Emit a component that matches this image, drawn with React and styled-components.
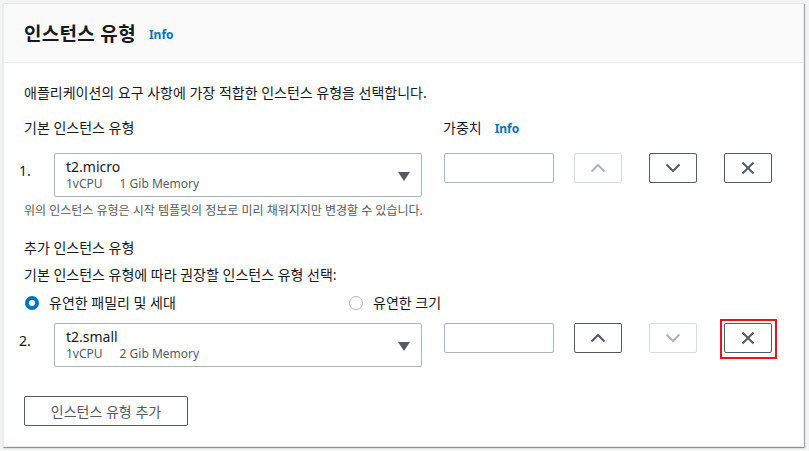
import React from 'react';
import styled, {createGlobalStyle} from 'styled-components';

const GlobalStyle = createGlobalStyle`
  html, body {
    margin: 0;
    padding: 0;
    background: #f2f3f3;
  }
  body {
    font-family: 'Noto Sans', 'Noto Sans CJK KR', sans-serif;
    color: #16191f;
    font-size: 14px;
  }
`;

const Page = styled.div`
  padding: 3px 0 0 3px;
  width: 809px;
  height: 451px;
  box-sizing: border-box;
`;

const Card = styled.section`
  width: 801px;
  background: #fff;
  border: 1px solid #eaeded;
  border-top-color: #e4e7e7;
  box-sizing: border-box;
  box-shadow: 1px 1px 1px 0 rgba(0, 28, 36, 0.3), 0 1px 1px 0 rgba(0, 28, 36, 0.2);
`;

const Header = styled.header`
  height: 58px;
  background: #fafafa;
  border-bottom: 1px solid #eaeded;
  display: flex;
  align-items: center;
  padding-left: 20px;
  gap: 13px;
`;

const Title = styled.h2`
  margin: 0;
  font-size: 19px;
  font-weight: 700;
  color: #16191f;
  letter-spacing: 0.3px;
`;

const Info = styled.span`
  font-size: 12px;
  font-weight: 700;
  color: #0073bb;
  margin-top: 2px;
`;

const Body = styled.div`
  padding: 20px 0 20px 0;
`;

const Text = styled.div`
  padding-left: 20px;
  line-height: 20px;
  font-size: 14px;
  margin-top: ${p => p.$mt || 0}px;
`;

const LabelRow = styled.div`
  display: flex;
  align-items: center;
  margin-top: 14px;
  line-height: 20px;
  padding-left: 20px;
`;

const Label = styled.span`
  width: 419px;
`;

const WeightLabel = styled.span`
  display: flex;
  align-items: center;
  gap: 13px;
`;

const Hint = styled.div`
  padding-left: 20px;
  font-size: 12px;
  line-height: 18px;
  color: #545b64;
  margin-top: 5px;
`;

const Row = styled.div`
  display: flex;
  align-items: flex-start;
  padding-left: 15px;
  margin-top: ${p => p.$mt}px;
`;

const Num = styled.span`
  width: 35px;
  padding-top: 8px;
  line-height: 20px;
`;

const Select = styled.div`
  width: 368px;
  height: 44px;
  box-sizing: border-box;
  border: 1px solid #aab7b8;
  border-radius: 2px;
  display: flex;
  align-items: center;
  padding: 0 11px;
`;

const SelectText = styled.div`
  flex: 1;
  display: flex;
  flex-direction: column;
`;

const Main = styled.span`
  line-height: 18px;
  font-size: 14px;
`;

const Sub = styled.span`
  font-size: 12px;
  line-height: 16px;
  color: #545b64;
  display: flex;
  gap: 17px;
`;

const Caret = styled.span`
  width: 0;
  height: 0;
  border-left: 6px solid transparent;
  border-right: 6px solid transparent;
  border-top: 9px solid #545b64;
  margin-top: 2px;
`;

const WeightInput = styled.div`
  width: 110px;
  height: 30px;
  box-sizing: border-box;
  border: 1px solid #aab7b8;
  border-radius: 2px;
  margin-left: 22px;
`;

const IconButton = styled.button`
  position: relative;
  width: 48px;
  height: 30px;
  box-sizing: border-box;
  border: 1px solid ${p => (p.disabled ? '#d5dbdb' : '#545b64')};
  border-radius: 2px;
  background: #fff;
  color: ${p => (p.disabled ? '#aab7b8' : '#545b64')};
  display: flex;
  align-items: center;
  justify-content: center;
  padding: 0;
  margin-left: ${p => p.$ml}px;

  &::after {
    content: '';
    display: ${p => (p.$highlight ? 'block' : 'none')};
    position: absolute;
    left: -5px;
    top: -5px;
    right: -6px;
    bottom: -7px;
    border: 2px solid #e8141e;
  }
`;

const RadioRow = styled.div`
  display: flex;
  align-items: center;
  padding-left: 21px;
  margin-top: 8px;
  line-height: 20px;
`;

const RadioItem = styled.label`
  display: flex;
  align-items: center;
  gap: 10px;
  width: ${p => p.$w}px;
`;

const Radio = styled.span`
  width: 14px;
  height: 14px;
  box-sizing: border-box;
  border-radius: 50%;
  border: ${p => (p.$checked ? '4px solid #0073bb' : '1px solid #aab7b8')};
  background: #fff;
`;

const AddButton = styled.button`
  display: block;
  margin: 29px 0 0 20px;
  width: 164px;
  height: 30px;
  box-sizing: border-box;
  border: 1px solid #545b64;
  border-radius: 2px;
  background: #fff;
  font-family: inherit;
  font-size: 14px;
  color: #545b64;
  padding: 0;
`;

const Chevron = ({up}) => (
  <svg width="16" height="10" viewBox="0 0 16 10" fill="none">
    <path
      d={up ? 'M1.5 8.5 L8 2 L14.5 8.5' : 'M1.5 1.5 L8 8 L14.5 1.5'}
      stroke="currentColor"
      strokeWidth="2"
    />
  </svg>
);

const Cross = () => (
  <svg width="14" height="14" viewBox="0 0 14 14" fill="none">
    <path d="M1.5 1.5 L12.5 12.5 M12.5 1.5 L1.5 12.5" stroke="currentColor" strokeWidth="2" />
  </svg>
);

const TypeRow = ({n, name, mem, upDisabled, downDisabled, highlight, mt}) => (
  <Row $mt={mt}>
    <Num>{n}.</Num>
    <Select>
      <SelectText>
        <Main>{name}</Main>
        <Sub>
          <span>1vCPU</span>
          <span>{mem} Gib Memory</span>
        </Sub>
      </SelectText>
      <Caret />
    </Select>
    <WeightInput />
    <IconButton $ml={20} disabled={upDisabled}>
      <Chevron up />
    </IconButton>
    <IconButton $ml={27} disabled={downDisabled}>
      <Chevron />
    </IconButton>
    <IconButton $ml={27} $highlight={highlight}>
      <Cross />
    </IconButton>
  </Row>
);

export default function App() {
  return (
    <Page>
      <GlobalStyle />
      <Card>
        <Header>
          <Title>인스턴스 유형</Title>
          <Info>Info</Info>
        </Header>
        <Body>
          <Text>애플리케이션의 요구 사항에 가장 적합한 인스턴스 유형을 선택합니다.</Text>
          <LabelRow>
            <Label>기본 인스턴스 유형</Label>
            <WeightLabel>
              가중치 <Info>Info</Info>
            </WeightLabel>
          </LabelRow>
          <TypeRow n={1} name="t2.micro" mem={1} upDisabled mt={14} />
          <Hint>위의 인스턴스 유형은 시작 템플릿의 정보로 미리 채워지지만 변경할 수 있습니다.</Hint>
          <Text $mt={18}>추가 인스턴스 유형</Text>
          <Text $mt={7}>기본 인스턴스 유형에 따라 권장할 인스턴스 유형 선택:</Text>
          <RadioRow>
            <RadioItem $w={324}>
              <Radio $checked />
              유연한 패밀리 및 세대
            </RadioItem>
            <RadioItem>
              <Radio />
              유연한 크기
            </RadioItem>
          </RadioRow>
          <TypeRow n={2} name="t2.small" mem={2} downDisabled highlight mt={10} />
          <AddButton>인스턴스 유형 추가</AddButton>
        </Body>
      </Card>
    </Page>
  );
}
